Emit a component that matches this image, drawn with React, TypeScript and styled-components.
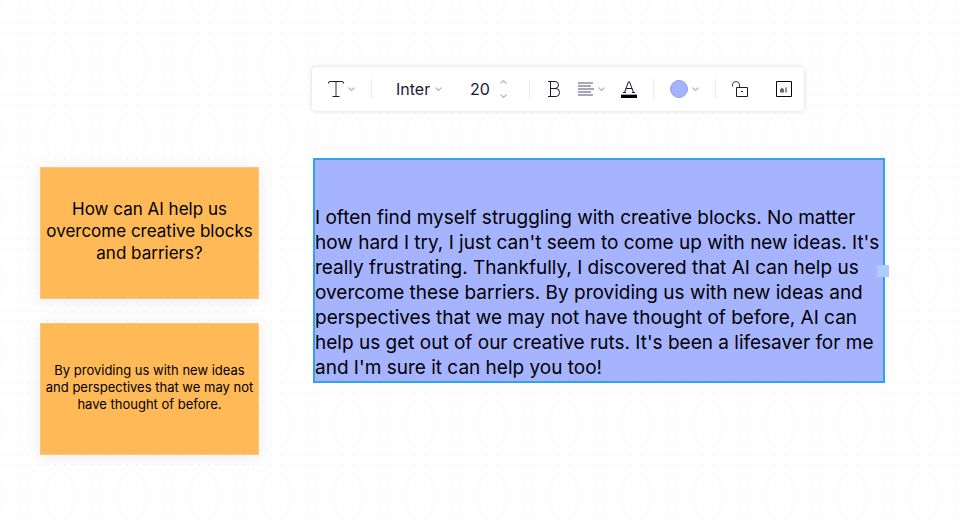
import React, { useState } from "react";
import styled, { createGlobalStyle, css } from "styled-components";

const GlobalStyle = createGlobalStyle`
  *, *::before, *::after { box-sizing: border-box; }
  body {
    margin: 0;
    background: #fefefe;
    color: #000;
    font-family: Inter, "Liberation Sans", sans-serif;
  }
  button, input, select { font: inherit; color: inherit; }
`;

const Board = styled.main`
  display: flex;
  gap: 53px;
  min-height: 100vh;
  padding: 67px 77px 40px 40px;
  background-image: radial-gradient(circle, #eeeeef 0, transparent 1px);
  background-position: -3px 1px;
  background-size: 9px 9px;
`;

const Notes = styled.section`
  display: flex;
  flex: 0 0 219px;
  flex-direction: column;
  gap: 24px;
  padding-top: 100px;
`;

const StickyNote = styled.article<{ $small?: boolean }>`
  display: flex;
  align-items: center;
  justify-content: center;
  min-height: 132px;
  padding: 0 1px 4px;
  background: #ffba57;
  border: 1px solid #fbc67c;
  box-shadow: 0 2px 16px rgba(0, 0, 0, 0.07);
  text-align: center;
  ${({ $small }) =>
    $small
      ? css`
          font-size: 13px;
          line-height: 17px;
        `
      : css`
          font-size: 17px;
          line-height: 22px;
        `}

  p { margin: 0; }
`;

const Workspace = styled.section`
  display: flex;
  flex: 1;
  flex-direction: column;
  align-items: flex-start;
  gap: 47px;
  min-width: 0;
`;

const Toolbar = styled.div`
  display: flex;
  align-items: center;
  gap: 16px;
  height: 44px;
  padding: 0 12px 0 16px;
  background: #fff;
  border-radius: 4px;
  box-shadow: 0 0 4px rgba(0, 0, 0, 0.16);
  color: #1b1836;
`;

const Divider = styled.span`
  width: 1px;
  height: 20px;
  background: #ececf0;
`;

const ToolButton = styled.button<{ $spaced?: boolean }>`
  display: flex;
  align-items: center;
  gap: 4px;
  margin: 0 0 0 ${({ $spaced }) => ($spaced ? "12px" : "0")};
  padding: 0;
  background: none;
  border: 0;
  cursor: pointer;
`;

const FontField = styled.label`
  display: flex;
  align-items: center;
  margin: 0 12px 0 8px;
`;

const FontSelect = styled.select`
  width: 39px;
  padding: 0;
  appearance: none;
  background: none;
  border: 0;
  font-size: 16px;
  line-height: 20px;
`;

const SizeField = styled.div`
  display: flex;
  align-items: center;
  gap: 8px;
  margin-right: 6px;
`;

const SizeInput = styled.input`
  width: 22px;
  padding: 0;
  background: none;
  border: 0;
  font-size: 16px;
  line-height: 20px;
`;

const Stepper = styled.div`
  display: flex;
  flex-direction: column;
  gap: 8px;
`;

const Swatch = styled.span`
  width: 18px;
  height: 18px;
  background: #a5b3ff;
  border: 1px solid #929ee6;
  border-radius: 50%;
`;

const SelectedCard = styled.article`
  position: relative;
  display: flex;
  align-items: flex-end;
  align-self: stretch;
  min-height: 225px;
  margin-left: 1px;
  padding: 0 0 1px;
  background: #a6b4ff;
  border: 2px solid #30a3f0;
  font-size: 19px;
  line-height: 25px;

  p { margin: 0; }
`;

const ResizeHandle = styled.span`
  position: absolute;
  top: 105px;
  right: -6px;
  width: 12px;
  height: 12px;
  background: #afcbff;
  cursor: ew-resize;
`;

const Chevron = ({ up = false }: { up?: boolean }) => (
  <svg width="7" height="6" viewBox="0 0 7 6" fill="none" stroke="#b4b4be" strokeWidth="1.1" aria-hidden="true">
    <path d={up ? "M.5 4.5 3.5 1.5 6.5 4.5" : "M.5 1.5 3.5 4.5 6.5 1.5"} />
  </svg>
);

const TextIcon = () => (
  <svg width="16" height="16" viewBox="0 0 16 16" fill="none" stroke="#1b1836" aria-hidden="true">
    <path d="M.5 2.5V2Q.5.5 2 .5H14Q15.5.5 15.5 2V2.5M4.5 15.5H11.5" />
    <path d="M8 1V15" strokeWidth="2" strokeOpacity=".45" />
  </svg>
);

const BoldIcon = () => (
  <svg width="16" height="16" viewBox="0 0 16 16" fill="none" stroke="#1b1836" aria-hidden="true">
    <path d="M2 .5H9Q12.5.5 12.5 4T9 7.5H4.5H10Q13.5 7.5 13.5 11.5T10 15.5H2M4.5.5V15.5" />
  </svg>
);

const AlignIcon = () => (
  <svg width="16" height="14" viewBox="0 0 16 14" fill="none" stroke="#8d8b9b" strokeWidth="1.6" aria-hidden="true">
    <path d="M0 1H15M0 4H13M0 7H16M0 10H13M0 13H15" />
  </svg>
);

const ColorIcon = () => (
  <svg width="16" height="17" viewBox="0 0 16 17" fill="none" aria-hidden="true">
    <path d="M3.5 11.5 7.5.8H8.5L12.5 11.5M4.8 7.5H11.2M2 11.5H5M11 11.5H14" stroke="#1b1836" />
    <path d="M0 14H16V17H0Z" fill="#000" />
    <path d="M0 13.5H16" stroke="#000" strokeOpacity=".35" />
  </svg>
);

const UnlockIcon = () => (
  <svg width="16" height="16" viewBox="0 0 16 16" fill="none" stroke="#1b1836" aria-hidden="true">
    <path d="M4.5 6.5H15.5V15.5H4.5ZM9 10.5H11" />
    <path d="M.5 5.5V4Q.5.5 4 .5T7.5 4V6.5" strokeOpacity=".85" />
  </svg>
);

const AiIcon = () => (
  <svg width="16" height="16" viewBox="0 0 16 16" fill="none" aria-hidden="true">
    <path d="M.5.5H15.5V15.5H.5Z" stroke="#08080c" />
    <path d="M4 11.5V8.5L6 6.5 8 8.5V11.5Z" fill="#66666c" />
    <path d="M10 6.5V11.5" stroke="#77777d" strokeWidth="1.6" />
  </svg>
);

export default function App() {
  const [size, setSize] = useState(20);

  return (
    <>
      <GlobalStyle />
      <Board>
        <Notes aria-label="Sticky notes">
          <StickyNote>
            <p>How can AI help us overcome creative blocks and barriers?</p>
          </StickyNote>
          <StickyNote $small>
            <p>By providing us with new ideas and perspectives that we may not have thought of before.</p>
          </StickyNote>
        </Notes>
        <Workspace>
          <Toolbar role="toolbar" aria-label="Text formatting">
            <ToolButton aria-label="Text type"><TextIcon /><Chevron /></ToolButton>
            <Divider />
            <FontField>
              <FontSelect aria-label="Font" defaultValue="Inter">
                <option>Inter</option>
              </FontSelect>
              <Chevron />
            </FontField>
            <SizeField>
              <SizeInput
                aria-label="Font size"
                inputMode="numeric"
                value={size}
                onChange={(event) => setSize(Number(event.target.value) || 0)}
              />
              <Stepper>
                <ToolButton aria-label="Increase font size" onClick={() => setSize(size + 1)}><Chevron up /></ToolButton>
                <ToolButton aria-label="Decrease font size" onClick={() => setSize(size - 1)}><Chevron /></ToolButton>
              </Stepper>
            </SizeField>
            <Divider />
            <ToolButton aria-label="Bold"><BoldIcon /></ToolButton>
            <ToolButton aria-label="Align text"><AlignIcon /><Chevron /></ToolButton>
            <ToolButton aria-label="Text color"><ColorIcon /></ToolButton>
            <Divider />
            <ToolButton aria-label="Fill color"><Swatch /><Chevron /></ToolButton>
            <Divider />
            <ToolButton aria-label="Unlock"><UnlockIcon /></ToolButton>
            <ToolButton $spaced aria-label="AI assistant"><AiIcon /></ToolButton>
          </Toolbar>
          <SelectedCard>
            <p>
              I often find myself struggling with creative blocks. No matter how hard I try, I just can't seem to come
              up with new ideas. It's really frustrating. Thankfully, I discovered that AI can help us overcome these
              barriers. By providing us with new ideas and perspectives that we may not have thought of before, AI can
              help us get out of our creative ruts. It's been a lifesaver for me and I'm sure it can help you too!
            </p>
            <ResizeHandle />
          </SelectedCard>
        </Workspace>
      </Board>
    </>
  );
}
